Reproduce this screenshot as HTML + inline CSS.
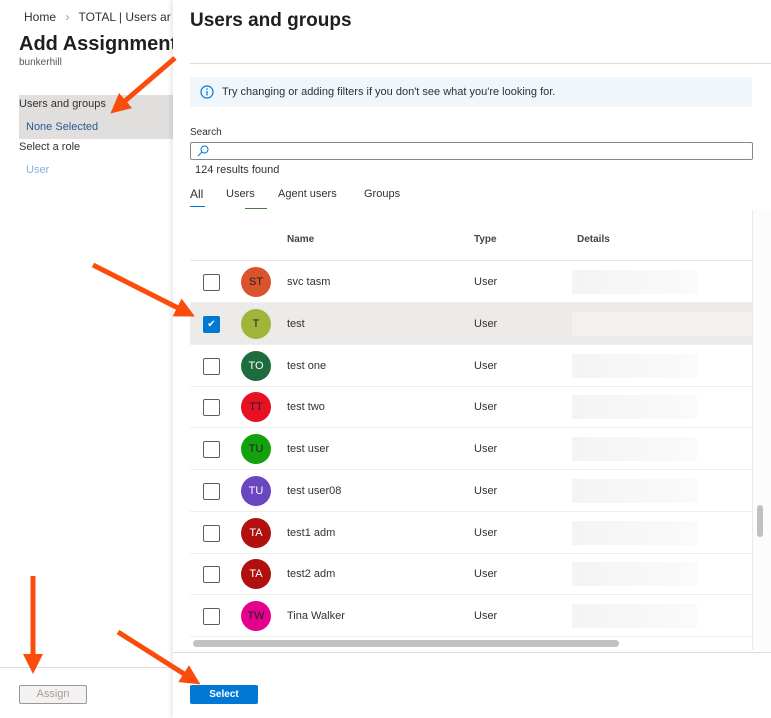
<!DOCTYPE html>
<html><head><style>
*{margin:0;padding:0;box-sizing:border-box}
body{width:771px;height:718px;overflow:hidden;background:#fff;font-family:"Liberation Sans",sans-serif;color:#323130;position:relative}
.a{position:absolute}
.t{font-size:11px}
.row{position:absolute;left:190px;width:562px;height:42px;border-bottom:1px solid #f0efee}
.cb{position:absolute;left:13px;top:13px;width:17px;height:17px;border:1px solid #605e5c;border-radius:2px;background:#fff}
.av{position:absolute;left:51px;top:6px;width:30px;height:30px;border-radius:50%;font-size:11px;text-align:center;line-height:30px;color:#201f1e}
.nm{position:absolute;left:97px;top:15px;font-size:11px}
.ty{position:absolute;left:284px;top:15px;font-size:11px}
.bl{position:absolute;left:382px;top:9px;width:125px;height:24px;background:linear-gradient(90deg,#f4f4f4,#fafafa)}
</style></head><body>
<div class="a" style="left:24px;top:10px;font-size:12px">Home <span style="color:#999;margin:0 6px">›</span> TOTAL | Users ar</div>
<div class="a" style="left:19px;top:33px;font-size:20px;font-weight:bold;color:#201f1e">Add Assignment</div>
<div class="a t" style="left:19px;top:57px;font-size:10px;color:#555">bunkerhill</div>
<div class="a" style="left:19px;top:95px;width:155px;height:44px;background:#e1dfdd"></div>
<div class="a t" style="left:19px;top:98px">Users and groups</div>
<div class="a t" style="left:26px;top:121px;color:#2b5797">None Selected</div>
<div class="a t" style="left:19px;top:141px">Select a role</div>
<div class="a t" style="left:26px;top:164px;color:#8ab0e0">User</div>
<div class="a" style="left:0;top:667px;width:174px;height:1px;background:#ddd"></div>
<div class="a" style="left:19px;top:685px;width:68px;height:19px;border:1px solid #999;border-radius:2px;background:#f3f2f1;font-size:11px;color:#a19f9d;text-align:center;line-height:17px">Assign</div>
<div class="a" style="left:173px;top:0;width:598px;height:718px;background:#fff;box-shadow:-2px 0 5px rgba(0,0,0,.10)"></div>
<div class="a" style="left:190px;top:10px;font-size:19px;font-weight:bold;color:#201f1e">Users and groups</div>
<div class="a" style="left:190px;top:63px;width:581px;height:1px;background:#ddd"></div>
<div class="a" style="left:190px;top:77px;width:562px;height:30px;background:#eff6fc"></div>
<svg class="a" style="left:200px;top:85px" width="14" height="14"><circle cx="7" cy="7" r="6" fill="none" stroke="#0078d4" stroke-width="1.2"/><line x1="7" y1="6" x2="7" y2="10.5" stroke="#0078d4" stroke-width="1.2"/><circle cx="7" cy="4" r=".8" fill="#0078d4"/></svg>
<div class="a t" style="left:222px;top:86px">Try changing or adding filters if you don't see what you're looking for.</div>
<div class="a" style="left:190px;top:127px;font-size:10px">Search</div>
<div class="a" style="left:190px;top:142px;width:563px;height:18px;border:1px solid #8a8886;border-radius:2px"></div>
<svg class="a" style="left:197px;top:145px" width="12" height="12"><circle cx="7.5" cy="4.5" r="3.5" fill="none" stroke="#0078d4"/><line x1="5" y1="7" x2="1" y2="11" stroke="#0078d4"/></svg>
<div class="a t" style="left:195px;top:164px">124 results found</div>
<div class="a t" style="left:190px;top:187px;font-size:12px">All</div>
<div class="a" style="left:190px;top:206px;width:15px;height:1px;background:#0078d4"></div>
<div class="a t" style="left:226px;top:188px">Users</div>
<div class="a" style="left:245px;top:208px;width:22px;height:1px;background:#4a7a4a"></div>
<div class="a t" style="left:278px;top:188px">Agent users</div>
<div class="a t" style="left:364px;top:188px">Groups</div>
<div class="a" style="left:752px;top:210px;width:19px;height:440px;background:#fcfcfc;border-left:1px solid #e8e8e8"></div>
<div class="a" style="left:757px;top:505px;width:6px;height:32px;background:#c1c1c1;border-radius:3px"></div>
<div class="a t" style="left:287px;top:234px;font-size:10px;font-weight:bold;color:#444">Name</div>
<div class="a t" style="left:474px;top:234px;font-size:10px;font-weight:bold;color:#444">Type</div>
<div class="a t" style="left:577px;top:234px;font-size:10px;font-weight:bold;color:#444">Details</div>
<div class="a" style="left:190px;top:260px;width:562px;height:1px;background:#e8e8e8"></div>
<div class="row" style="top:261px"><div class="cb"></div><div class="av" style="background:#da532c">ST</div><div class="nm">svc tasm</div><div class="ty">User</div><div class="bl"></div></div>
<div class="row" style="top:303px;background:#edebe9"><div class="cb" style="background:#0078d4;border-color:#0078d4;color:#fff;font-size:10px;text-align:center;line-height:15px">✔</div><div class="av" style="background:#9fb63a">T</div><div class="nm">test</div><div class="ty">User</div><div class="bl" style="width:180px;background:#f2f1f0"></div></div>
<div class="row" style="top:345px"><div class="cb"></div><div class="av" style="background:#1e6b3e;color:#fff">TO</div><div class="nm">test one</div><div class="ty">User</div><div class="bl"></div></div>
<div class="row" style="top:386px"><div class="cb"></div><div class="av" style="background:#e81123">TT</div><div class="nm">test two</div><div class="ty">User</div><div class="bl"></div></div>
<div class="row" style="top:428px"><div class="cb"></div><div class="av" style="background:#13a10e">TU</div><div class="nm">test user</div><div class="ty">User</div><div class="bl"></div></div>
<div class="row" style="top:470px"><div class="cb"></div><div class="av" style="background:#6b46c1;color:#fff">TU</div><div class="nm">test user08</div><div class="ty">User</div><div class="bl"></div></div>
<div class="row" style="top:512px"><div class="cb"></div><div class="av" style="background:#b0110f;color:#fff">TA</div><div class="nm">test1 adm</div><div class="ty">User</div><div class="bl"></div></div>
<div class="row" style="top:553px"><div class="cb"></div><div class="av" style="background:#b0110f;color:#fff">TA</div><div class="nm">test2 adm</div><div class="ty">User</div><div class="bl"></div></div>
<div class="row" style="top:595px"><div class="cb"></div><div class="av" style="background:#e3008c">TW</div><div class="nm">Tina Walker</div><div class="ty">User</div><div class="bl"></div></div>
<div class="a" style="left:193px;top:640px;width:426px;height:7px;background:#c1c1c1;border-radius:4px"></div>
<div class="a" style="left:173px;top:652px;width:598px;height:1px;background:#ddd"></div>
<div class="a" style="left:190px;top:685px;width:68px;height:19px;background:#0078d4;border-radius:2px;color:#fff;font-size:10px;font-weight:bold;text-align:center;line-height:19px">Select</div>
<svg class="a" style="left:0;top:0" width="771" height="718">
<defs><marker id="m" markerWidth="4" markerHeight="4" refX="2" refY="2" orient="auto" markerUnits="strokeWidth"><path d="M0,0 L4,2 L0,4 z" fill="#fc4c0c"/></marker></defs>
<g stroke="#fc4c0c" stroke-width="5" fill="none" marker-end="url(#m)">
<line x1="175" y1="58" x2="118" y2="107"/>
<line x1="93" y1="265" x2="186" y2="312"/>
<line x1="33" y1="576" x2="33" y2="664"/>
<line x1="118" y1="632" x2="192" y2="679"/>
</g></svg>
</body></html>
